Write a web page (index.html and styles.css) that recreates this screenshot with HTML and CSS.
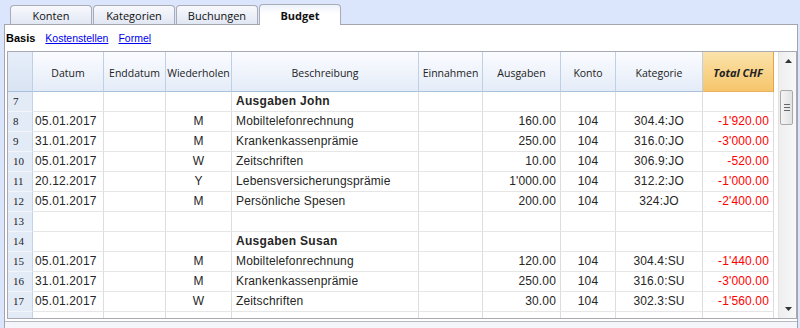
FILE: index.html
```html
<!DOCTYPE html>
<html lang="de">
<head>
<meta charset="utf-8">
<title>Budget</title>
<link rel="stylesheet" href="styles.css">
</head>
<body>
<div class="tabs">
  <div class="tab">Konten</div>
  <div class="tab">Kategorien</div>
  <div class="tab">Buchungen</div>
  <div class="tab active">Budget</div>
</div>
<div class="panel">
  <div class="subnav">
    <span class="cur">Basis</span>
    <a href="#">Kostenstellen</a>
    <a href="#">Formel</a>
  </div>
  <div class="grid">
    <div class="sheet">
      <div class="row head">
        <div class="h num"></div>
        <div class="h">Datum</div>
        <div class="h">Enddatum</div>
        <div class="h">Wiederholen</div>
        <div class="h">Beschreibung</div>
        <div class="h">Einnahmen</div>
        <div class="h">Ausgaben</div>
        <div class="h">Konto</div>
        <div class="h">Kategorie</div>
        <div class="h total">Total CHF</div>
      </div>
      <div class="row"><div class="c num">7</div><div class="c"></div><div class="c"></div><div class="c"></div><div class="c l b">Ausgaben John</div><div class="c"></div><div class="c"></div><div class="c"></div><div class="c"></div><div class="c"></div></div>
      <div class="row"><div class="c num">8</div><div class="c d">05.01.2017</div><div class="c"></div><div class="c m">M</div><div class="c l">Mobiltelefonrechnung</div><div class="c"></div><div class="c r">160.00</div><div class="c m">104</div><div class="c m">304.4:JO</div><div class="c r neg">-1'920.00</div></div>
      <div class="row"><div class="c num">9</div><div class="c d">31.01.2017</div><div class="c"></div><div class="c m">M</div><div class="c l">Krankenkassenprämie</div><div class="c"></div><div class="c r">250.00</div><div class="c m">104</div><div class="c m">316.0:JO</div><div class="c r neg">-3'000.00</div></div>
      <div class="row"><div class="c num">10</div><div class="c d">05.01.2017</div><div class="c"></div><div class="c m">W</div><div class="c l">Zeitschriften</div><div class="c"></div><div class="c r">10.00</div><div class="c m">104</div><div class="c m">306.9:JO</div><div class="c r neg">-520.00</div></div>
      <div class="row"><div class="c num">11</div><div class="c d">20.12.2017</div><div class="c"></div><div class="c m">Y</div><div class="c l">Lebensversicherungsprämie</div><div class="c"></div><div class="c r">1'000.00</div><div class="c m">104</div><div class="c m">312.2:JO</div><div class="c r neg">-1'000.00</div></div>
      <div class="row"><div class="c num">12</div><div class="c d">05.01.2017</div><div class="c"></div><div class="c m">M</div><div class="c l">Persönliche Spesen</div><div class="c"></div><div class="c r">200.00</div><div class="c m">104</div><div class="c m">324:JO</div><div class="c r neg">-2'400.00</div></div>
      <div class="row"><div class="c num">13</div><div class="c"></div><div class="c"></div><div class="c"></div><div class="c"></div><div class="c"></div><div class="c"></div><div class="c"></div><div class="c"></div><div class="c"></div></div>
      <div class="row"><div class="c num">14</div><div class="c"></div><div class="c"></div><div class="c"></div><div class="c l b">Ausgaben Susan</div><div class="c"></div><div class="c"></div><div class="c"></div><div class="c"></div><div class="c"></div></div>
      <div class="row"><div class="c num">15</div><div class="c d">05.01.2017</div><div class="c"></div><div class="c m">M</div><div class="c l">Mobiltelefonrechnung</div><div class="c"></div><div class="c r">120.00</div><div class="c m">104</div><div class="c m">304.4:SU</div><div class="c r neg">-1'440.00</div></div>
      <div class="row"><div class="c num">16</div><div class="c d">31.01.2017</div><div class="c"></div><div class="c m">M</div><div class="c l">Krankenkassenprämie</div><div class="c"></div><div class="c r">250.00</div><div class="c m">104</div><div class="c m">316.0:SU</div><div class="c r neg">-3'000.00</div></div>
      <div class="row"><div class="c num">17</div><div class="c d">05.01.2017</div><div class="c"></div><div class="c m">W</div><div class="c l">Zeitschriften</div><div class="c"></div><div class="c r">30.00</div><div class="c m">104</div><div class="c m">302.3:SU</div><div class="c r neg">-1'560.00</div></div>
      <div class="row"><div class="c num"></div><div class="c"></div><div class="c"></div><div class="c"></div><div class="c"></div><div class="c"></div><div class="c"></div><div class="c"></div><div class="c"></div><div class="c"></div></div>
    </div>
    <div class="gap"></div>
    <div class="scroll">
      <div class="sbtn"><svg width="7" height="4" viewBox="0 0 7 4"><path d="M0 4 L3.5 0 L7 4 Z" fill="#333"/></svg></div>
      <div class="track">
        <div class="thumb"><span></span><span></span><span></span></div>
      </div>
      <div class="sbtn"><svg width="7" height="4" viewBox="0 0 7 4"><path d="M0 0 L3.5 4 L7 0 Z" fill="#333"/></svg></div>
    </div>
  </div>
  <div class="foot"></div>
</div>
</body>
</html>
```

FILE: styles.css
```css
html, body {
  margin: 0;
  padding: 0;
}
body {
  width: 800px;
  height: 328px;
  overflow: hidden;
  background: #dbe5fc;
  font-family: "Liberation Sans", Arial, sans-serif;
  color: #222;
}
.tabs {
  display: flex;
  align-items: flex-end;
  height: 24px;
  padding-left: 10px;
  gap: 1px;
}
.tab {
  box-sizing: border-box;
  width: 82px;
  height: 19px;
  border: 1px solid #a9acb6;
  border-bottom: none;
  border-radius: 4px 4px 0 0;
  background: linear-gradient(#f8f9fd, #e1e7f3);
  font-family: "Open Sans", "Noto Sans", sans-serif;
  font-size: 11px;
  color: #111;
  display: flex;
  align-items: center;
  justify-content: center;
  padding-top: 1px;
}
.tab.active {
  height: 21px;
  margin-bottom: -1px;
  background: linear-gradient(#eef2fb, #ffffff 45%);
  font-weight: bold;
  position: relative;
  z-index: 1;
  padding-top: 0;
}
.panel {
  box-sizing: border-box;
  margin-left: 4px;
  width: 794px;
  height: 304px;
  background: #fff;
  border: 1px solid #a3a5ae;
  border-bottom: none;
}
.subnav {
  height: 26px;
  display: flex;
  align-items: center;
  gap: 10px;
  padding-left: 1px;
  font-size: 10.5px;
}
.subnav .cur {
  font-weight: bold;
  font-size: 11px;
  color: #000;
}
.subnav a {
  color: #0000ee;
  text-decoration: underline;
}
.grid {
  box-sizing: border-box;
  margin-left: 2px;
  width: 790px;
  height: 268px;
  border: 1px solid #a8a9b2;
  display: flex;
  overflow: hidden;
}
.sheet {
  width: 766px;
  flex: none;
}
.gap {
  width: 4px;
  flex: none;
}
.row {
  display: grid;
  grid-template-columns: 25px 71px 62px 66px 187px 64px 78px 55px 87px 71px;
  height: 20px;
}
.row.head {
  height: 40px;
}
.h {
  box-sizing: border-box;
  border-right: 1px solid #bdd0e6;
  border-bottom: 1px solid #a9c0dc;
  background: linear-gradient(#fbfcff, #e4ecf8);
  font-family: "Open Sans", "Noto Sans", sans-serif;
  font-size: 10.5px;
  color: #222;
  display: flex;
  align-items: center;
  justify-content: center;
  white-space: nowrap;
  padding-top: 2px;
}
.h.num {
  background: linear-gradient(#e6eef9, #d9e4f3);
}
.h.total {
  background: linear-gradient(#fbe3ab, #f5c56b);
  border-right: 1px solid #e9a24a;
  border-bottom: 1px solid #e9b060;
  font-weight: bold;
  font-style: italic;
  font-size: 11px;
}
.c {
  box-sizing: border-box;
  border-right: 1px solid #dddddd;
  border-bottom: 1px solid #e6e6e6;
  font-size: 12px;
  line-height: 19px;
  letter-spacing: 0.15px;
  white-space: nowrap;
  overflow: hidden;
  color: #262626;
}
.c.num {
  background: #e3ebf7;
  border-right: 1px solid #c4d3e6;
  border-bottom: 1px solid #f2f5fa;
  font-family: "Liberation Serif", serif;
  font-size: 11px;
  letter-spacing: 0;
  padding-left: 5px;
  color: #222;
}
.c.d {
  padding-left: 2px;
}
.c.l {
  padding-left: 4px;
}
.c.b {
  font-weight: bold;
  letter-spacing: 0.3px;
}
.c.m {
  text-align: center;
}
.c.r {
  text-align: right;
  padding-right: 4px;
}
.c.neg {
  color: #ff0000;
}
.scroll {
  width: 18px;
  flex: none;
  display: flex;
  flex-direction: column;
  background: linear-gradient(90deg, #eeeeee, #f8f8f8);
  border-left: 1px solid #e2e2e2;
}
.sbtn {
  height: 18px;
  display: flex;
  align-items: center;
  justify-content: center;
}
.track {
  flex: 1;
  padding-top: 20px;
}
.thumb {
  box-sizing: border-box;
  width: 13px;
  height: 35px;
  margin-left: 1px;
  border: 1px solid #a9a9a9;
  border-radius: 2px;
  background: linear-gradient(90deg, #f4f4f4, #e2e2e2);
  display: flex;
  flex-direction: column;
  align-items: center;
  justify-content: center;
  gap: 2px;
}
.thumb span {
  display: block;
  width: 6px;
  height: 1px;
  background: #666;
}
.foot {
  margin-top: 2px;
  height: 8px;
  border-top: 1px solid #b6b8c2;
  background: #f4f6fb;
}
```
